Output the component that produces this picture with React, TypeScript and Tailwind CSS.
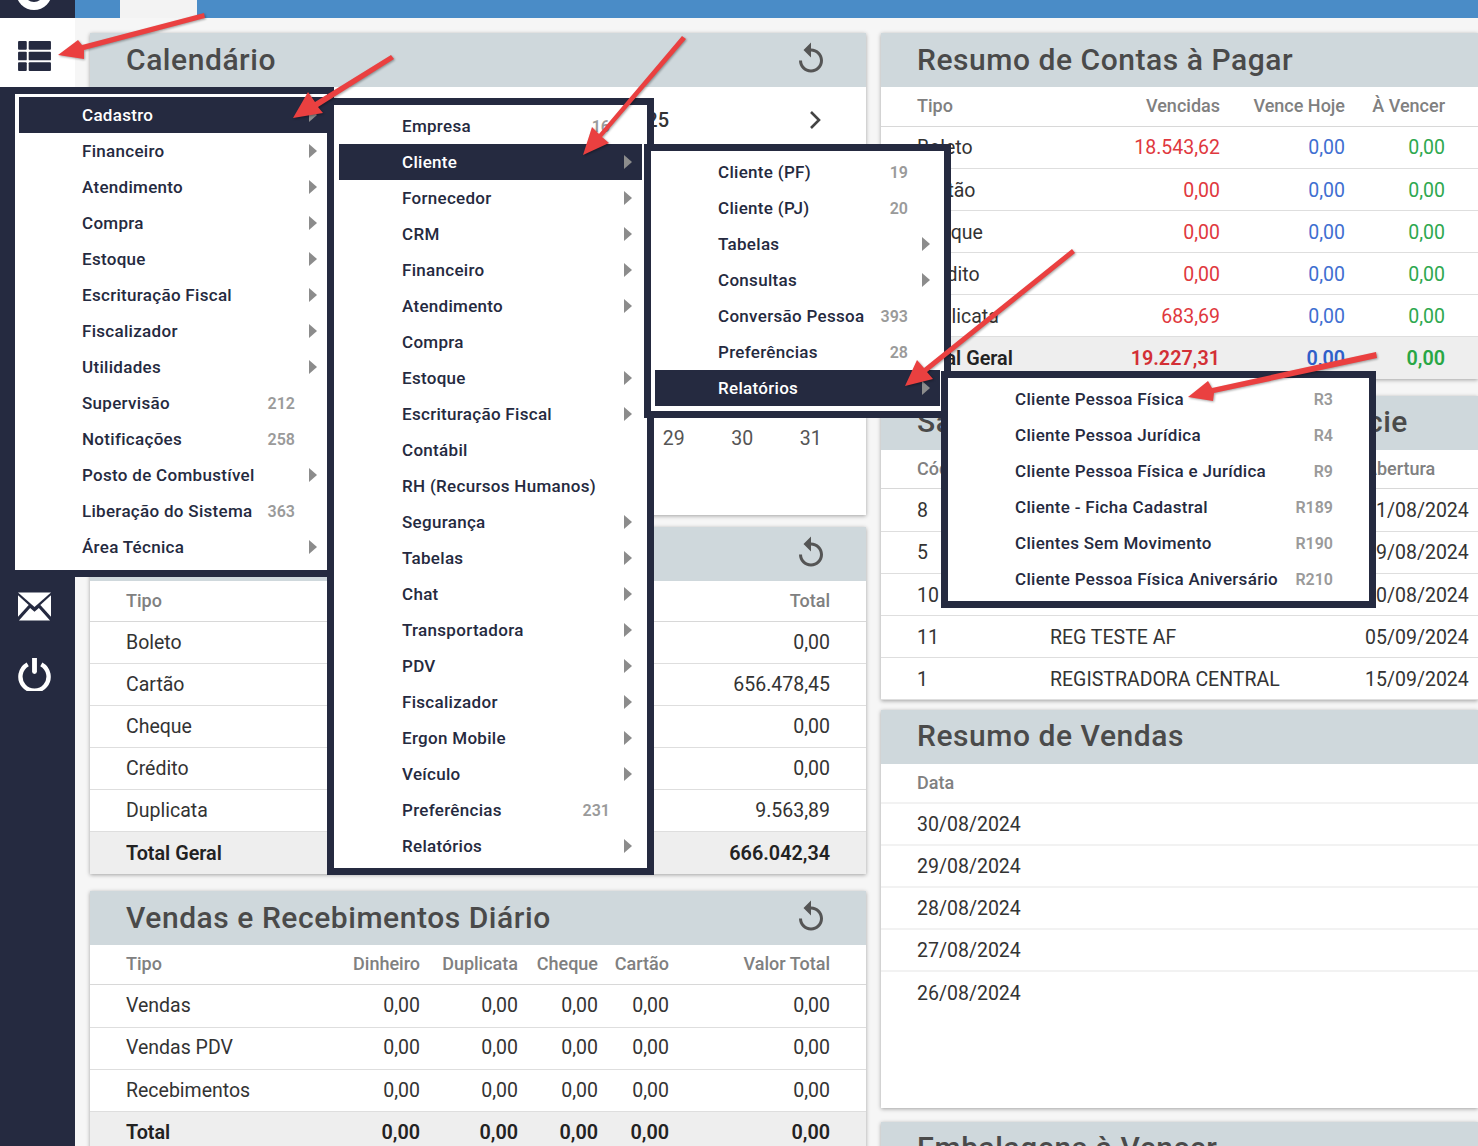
const NAVY = 'bg-[#252a40]'

function Arrow({ className = '' }: { className?: string }) {
  return (
    <svg width="8" height="14" viewBox="0 0 8 14" className={className}>
      <polygon points="0,0 8,7 0,14" fill="#8c8c8c" />
    </svg>
  )
}

function Replay() {
  return (
    <svg width="36" height="36" viewBox="0 0 24 24" fill="#555555">
      <path d="M12 5V1L7 6l5 5V7c3.31 0 6 2.69 6 6s-2.69 6-6 6-6-2.69-6-6H4c0 4.42 3.58 8 8 8s8-3.58 8-8-3.58-8-8-8z" />
    </svg>
  )
}

type MenuItem = { label: string; num?: string; sub?: boolean; active?: boolean }

function MenuRow({ item }: { item: MenuItem }) {
  return (
    <div
      className={
        'relative flex h-9 items-center pl-[63px] pr-8 pt-[2px] font-medium whitespace-nowrap ' +
        (item.active ? 'bg-[#252a40] text-white' : 'text-[#252a40]')
      }
    >
      <span className="flex-1 text-[17px] tracking-[0.3px]">{item.label}</span>
      {item.num && <span className="ml-3 text-[16px] font-semibold text-[#9a9a9a]">{item.num}</span>}
      {item.sub && <Arrow className="absolute right-[10px] top-[11px]" />}
    </div>
  )
}

const menu1: MenuItem[] = [
  { label: 'Cadastro', sub: true, active: true },
  { label: 'Financeiro', sub: true },
  { label: 'Atendimento', sub: true },
  { label: 'Compra', sub: true },
  { label: 'Estoque', sub: true },
  { label: 'Escrituração Fiscal', sub: true },
  { label: 'Fiscalizador', sub: true },
  { label: 'Utilidades', sub: true },
  { label: 'Supervisão', num: '212' },
  { label: 'Notificações', num: '258' },
  { label: 'Posto de Combustível', sub: true },
  { label: 'Liberação do Sistema', num: '363' },
  { label: 'Área Técnica', sub: true },
]

const menu2: MenuItem[] = [
  { label: 'Empresa', num: '16' },
  { label: 'Cliente', sub: true, active: true },
  { label: 'Fornecedor', sub: true },
  { label: 'CRM', sub: true },
  { label: 'Financeiro', sub: true },
  { label: 'Atendimento', sub: true },
  { label: 'Compra' },
  { label: 'Estoque', sub: true },
  { label: 'Escrituração Fiscal', sub: true },
  { label: 'Contábil' },
  { label: 'RH (Recursos Humanos)' },
  { label: 'Segurança', sub: true },
  { label: 'Tabelas', sub: true },
  { label: 'Chat', sub: true },
  { label: 'Transportadora', sub: true },
  { label: 'PDV', sub: true },
  { label: 'Fiscalizador', sub: true },
  { label: 'Ergon Mobile', sub: true },
  { label: 'Veículo', sub: true },
  { label: 'Preferências', num: '231' },
  { label: 'Relatórios', sub: true },
]

const menu3: MenuItem[] = [
  { label: 'Cliente (PF)', num: '19' },
  { label: 'Cliente (PJ)', num: '20' },
  { label: 'Tabelas', sub: true },
  { label: 'Consultas', sub: true },
  { label: 'Conversão Pessoa', num: '393' },
  { label: 'Preferências', num: '28' },
  { label: 'Relatórios', sub: true, active: true },
]

const menu4: MenuItem[] = [
  { label: 'Cliente Pessoa Física', num: 'R3' },
  { label: 'Cliente Pessoa Jurídica', num: 'R4' },
  { label: 'Cliente Pessoa Física e Jurídica', num: 'R9' },
  { label: 'Cliente - Ficha Cadastral', num: 'R189' },
  { label: 'Clientes Sem Movimento', num: 'R190' },
  { label: 'Cliente Pessoa Física Aniversário', num: 'R210' },
]

function Card({ title, refresh, children, className = '' }: { title?: React.ReactNode; refresh?: boolean; children: React.ReactNode; className?: string }) {
  return (
    <section className={'shrink-0 bg-white shadow-[0_1px_4px_rgba(0,0,0,0.35)] ' + className}>
      <header className="flex h-[54px] items-center justify-between bg-[#cfd8dc] pb-[2px] pl-9 pr-[37px] text-[30px] font-medium tracking-[0.55px] text-[#4a4a4a]">
        <div>{title}</div>
        {refresh && <Replay />}
      </header>
      {children}
    </section>
  )
}

const cellHead = 'items-center border-b border-[#d8d8d8] text-[18px] font-medium text-[#808080]'
const cellHeadTight = 'h-[39.5px] items-center border-b border-[#d8d8d8] pb-[2px] text-[18px] font-medium text-[#808080]'
const cellRow = 'h-[42.1px] items-center border-b border-[#dedede] text-[19.5px] text-[#333333]'
const cellTotal = 'h-[42px] items-center bg-[#eeeeee] text-[19.8px] font-semibold text-[#222222]'

const colsTipo = 'grid grid-cols-[1fr_auto] pl-9 pr-9'
const colsVendas = 'grid grid-cols-[226px_68px_98px_80px_71px_161px] pl-9 text-right'
const colsPagar = 'grid grid-cols-[183px_120px_125px_100px] pl-9 text-right'
const colsCaixa = 'grid grid-cols-[133px_315px_1fr] pl-9'

const pagar = [
  ['Boleto', '18.543,62'],
  ['Cartão', '0,00'],
  ['Cheque', '0,00'],
  ['Crédito', '0,00'],
  ['Duplicata', '683,69'],
]

const caixa = [
  ['8', '', '31/08/2024'],
  ['5', '', '29/08/2024'],
  ['10', '', '30/08/2024'],
  ['11', 'REG TESTE AF', '05/09/2024'],
  ['1', 'REGISTRADORA CENTRAL', '15/09/2024'],
]

export default function App() {
  return (
    <div className="relative h-[1146px] w-[1478px] overflow-hidden bg-[#f6f6f6] font-['Roboto',sans-serif]">
      {/* barra do topo */}
      <div className="flex h-[18px] overflow-hidden bg-[#4a8cc7]">
        <div className={'h-full w-[75px] pl-4 ' + NAVY}>
          <div className="-mt-[26px] flex h-9 w-9 items-center justify-center rounded-full bg-white">
            <div className="h-5 w-5 rounded-full bg-[#252a40]" />
          </div>
        </div>
        <div className="ml-[45px] flex h-full w-[77px] justify-center bg-[#f3f3f3] text-[15px] font-bold leading-none text-[#222222]">
          <span className="-mt-[12px]">Entrar</span>
        </div>
      </div>

      <div className="flex h-[1128px]">
        {/* lateral */}
        <aside className={'flex w-[75px] shrink-0 flex-col ' + NAVY}>
          <div className="h-[69px] w-full bg-white pl-[18px] pt-[23px]">
            <svg width="33" height="30" viewBox="0 0 34 31" fill="#252a40">
              <rect x="0" y="0" width="9" height="9" rx="1" />
              <rect x="11" y="0" width="23" height="9" rx="1" />
              <rect x="0" y="11" width="9" height="9" rx="1" />
              <rect x="11" y="11" width="23" height="9" rx="1" />
              <rect x="0" y="22" width="9" height="9" rx="1" />
              <rect x="11" y="22" width="23" height="9" rx="1" />
            </svg>
          </div>
          <svg className="ml-[18px] mt-[505px]" width="33" height="29" viewBox="0 0 34 29" fill="white">
            <polygon points="0,0 34,0 17,15" />
            <polygon points="0,3 0,25 11,13" />
            <polygon points="34,3 34,25 23,13" />
            <polygon points="1,29 33,29 21.5,16 17,20 12.5,16" />
          </svg>
          <svg className="ml-[18px] mt-[37px]" width="33" height="33" viewBox="0 0 34 34" fill="none" stroke="white">
            <path d="M10 6.5 A14.5 14.5 0 1 0 24 6.5" strokeWidth="4.5" />
            <line x1="17" y1="0" x2="17" y2="14" strokeWidth="5" strokeLinecap="round" />
          </svg>
        </aside>

        {/* conteudo */}
        <main className="flex min-w-0 flex-1 gap-[15px] pl-[15px] pt-[15px]">
          <div className="flex w-[776px] shrink-0 flex-col">
            <Card title="Calendário" refresh className="h-[482px]">
              <div className="flex h-[66px] items-center justify-end pr-[41px] text-[20px] font-medium text-[#333333]">
                <span className="mr-[136px]">2025</span>
                <svg width="20" height="20" viewBox="0 0 20 20" fill="none" stroke="#444444" strokeWidth="2.6">
                  <polyline points="6,2 14,10 6,18" />
                </svg>
              </div>
              <div className="mt-[271px] flex justify-end pr-[21px] text-center text-[19.5px] text-[#555555]">
                <span className="w-[68.5px]">29</span>
                <span className="w-[68.5px]">30</span>
                <span className="w-[68.5px]">31</span>
              </div>
            </Card>

            <Card refresh className="mt-3">
              <div className={colsTipo + ' ' + cellHead + ' h-[41px] pb-[2px]'}>
                <span>Tipo</span>
                <span>Total</span>
              </div>
              {[
                ['Boleto', '0,00'],
                ['Cartão', '656.478,45'],
                ['Cheque', '0,00'],
                ['Crédito', '0,00'],
                ['Duplicata', '9.563,89'],
              ].map(([a, b]) => (
                <div key={a} className={colsTipo + ' ' + cellRow}>
                  <span>{a}</span>
                  <span>{b}</span>
                </div>
              ))}
              <div className={colsTipo + ' ' + cellTotal}>
                <span>Total Geral</span>
                <span>666.042,34</span>
              </div>
            </Card>

            <Card title="Vendas e Recebimentos Diário" refresh className="mt-[17px]">
              <div className={colsVendas + ' ' + cellHead + ' h-[40px] pb-[2px]'}>
                <span className="text-left">Tipo</span>
                <span>Dinheiro</span>
                <span>Duplicata</span>
                <span>Cheque</span>
                <span>Cartão</span>
                <span>Valor Total</span>
              </div>
              {['Vendas', 'Vendas PDV', 'Recebimentos'].map((t) => (
                <div key={t} className={colsVendas + ' ' + cellRow}>
                  <span className="text-left">{t}</span>
                  <span>0,00</span>
                  <span>0,00</span>
                  <span>0,00</span>
                  <span>0,00</span>
                  <span>0,00</span>
                </div>
              ))}
              <div className={colsVendas + ' ' + cellTotal}>
                <span className="text-left">Total</span>
                <span>0,00</span>
                <span>0,00</span>
                <span>0,00</span>
                <span>0,00</span>
                <span>0,00</span>
              </div>
            </Card>
          </div>

          <div className="flex min-w-0 flex-1 flex-col">
            <Card title="Resumo de Contas à Pagar">
              <div className={colsPagar + ' ' + cellHeadTight}>
                <span className="text-left">Tipo</span>
                <span>Vencidas</span>
                <span>Vence Hoje</span>
                <span>À Vencer</span>
              </div>
              {pagar.map(([a, b]) => (
                <div key={a} className={colsPagar + ' ' + cellRow + ' pt-[2px]'}>
                  <span className="text-left">{a}</span>
                  <span className="text-[#e0383e]">{b}</span>
                  <span className="text-[#3f6fd1]">0,00</span>
                  <span className="text-[#2ea84f]">0,00</span>
                </div>
              ))}
              <div className={colsPagar + ' ' + cellTotal + ' pt-[2px]'}>
                <span className="text-left">Total Geral</span>
                <span className="text-[#d32f35]">19.227,31</span>
                <span className="text-[#2f5fc9]">0,00</span>
                <span className="text-[#28a745]">0,00</span>
              </div>
            </Card>

            <Card
              className="mt-[17px]"
              title={
                <div className="flex w-[491px] justify-between">
                  <span>Sa</span>
                  <span>cie</span>
                </div>
              }
            >
              <div className={colsCaixa + ' ' + cellHeadTight}>
                <span>Cód</span>
                <span />
                <span>Abertura</span>
              </div>
              {caixa.map(([a, b, c]) => (
                <div key={a} className={colsCaixa + ' ' + cellRow + ' pt-[2px]'}>
                  <span>{a}</span>
                  <span>{b}</span>
                  <span>{c}</span>
                </div>
              ))}
            </Card>

            <Card title="Resumo de Vendas" className="mt-[10px] h-[398px]">
              <div className="flex h-[40px] items-center border-b-2 border-[#f2f2f2] pb-[1px] pl-9 text-[18px] font-medium text-[#808080]">Data</div>
              {['30/08/2024', '29/08/2024', '28/08/2024', '27/08/2024', '26/08/2024'].map((d, i) => (
                <div key={d} className={'flex h-[42px] items-center pl-9 pt-[2px] text-[19.5px] text-[#333333] ' + (i < 4 ? 'border-b-2 border-[#f2f2f2]' : '')}>
                  {d}
                </div>
              ))}
            </Card>

            <Card title="Embalagens à Vencer" className="mt-[14px]">
              <div />
            </Card>
          </div>
        </main>
      </div>

      {/* menus abertos */}
      <div className="absolute left-[8px] top-[87px] h-[490px] w-[326px] border-[7px] border-[#252a40] bg-white pl-1 pt-[3px]">
        {menu1.map((m) => <MenuRow key={m.label} item={m} />)}
      </div>
      <div className="absolute left-[327px] top-[98px] h-[777px] w-[327px] border-[7px] border-[#252a40] bg-white px-[5px] pt-[3px]">
        {menu2.map((m) => <MenuRow key={m.label} item={m} />)}
      </div>
      <div className="absolute left-[644px] top-[144px] h-[274px] w-[307px] border-[7px] border-[#252a40] bg-white pl-1 pr-1 pt-[3px]">
        {menu3.map((m) => <MenuRow key={m.label} item={m} />)}
      </div>
      <div className="absolute left-[941px] top-[371px] h-[237px] w-[435px] border-[7px] border-[#252a40] bg-white px-1 pt-[3px]">
        {menu4.map((m) => <MenuRow key={m.label} item={m} />)}
      </div>

      {/* setas vermelhas */}
      <svg className="pointer-events-none absolute left-0 top-0 drop-shadow-[1px_1px_1px_rgba(0,0,0,0.35)]" width="1478" height="1146" viewBox="0 0 1478 1146">
        <g fill="#ea4040">
          <polygon points="204,13 205,18 84,50 84,59 58,55 78,40 82,45" />
          <polygon points="391,55 394,59 318,107 323,113 293,118 308,92 315,102" />
          <polygon points="682,36 686,39 602,137 609,143 583,155 592,127 599,134" />
          <polygon points="1072,249 1075,253 927,372 933,379 905,386 917,360 924,368" />
          <polygon points="1376,352 1377,358 1214,393 1213,401 1188,397 1208,381 1212,388" />
        </g>
      </svg>
    </div>
  )
}
